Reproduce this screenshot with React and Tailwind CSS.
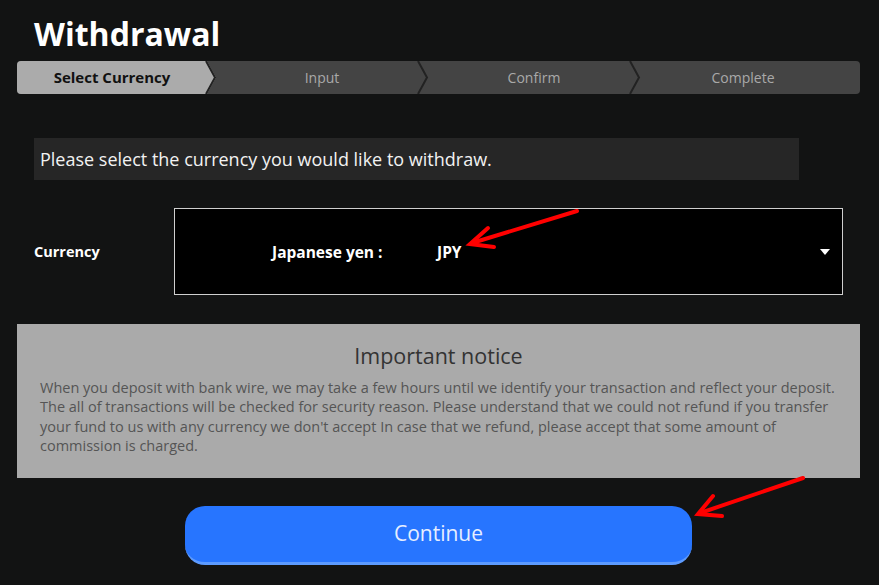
const steps = [
    { label: "Select Currency", width: "w-[199px] pr-[9px]" },
    { label: "Input", width: "w-[212px]" },
    { label: "Confirm", width: "w-[212px]" },
    { label: "Complete", width: "flex-1 pr-[14px]" },
];

export default function App() {
    return (
        <div
            className="relative min-h-[585px] w-[879px] bg-[#121313] pl-[17px] pr-[19px] pt-[12px]"
            style={{ fontFamily: '"Open Sans", "Noto Sans", sans-serif' }}
        >
            {/* title */}
            <h1 className="pl-[17px] text-[32px] font-bold leading-[44px] text-white">
                Withdrawal
            </h1>

            {/* steps */}
            <div className="mt-[5px] flex h-[33px] overflow-hidden rounded-[4px] bg-[#444444]">
                {steps.map((s, i) => (
                    <div key={s.label} className={"relative flex items-center justify-center " + s.width}>
                        {i === 0 && (
                            <div className="absolute inset-0 bg-[#ababab] [clip-path:polygon(0_0,calc(100%-9px)_0,100%_50%,calc(100%-9px)_100%,0_100%)]" />
                        )}
                        <span
                            className={
                                i === 0
                                    ? "relative text-[15px] font-bold text-[#111]"
                                    : "relative text-[14px] text-[#a9a9a9]"
                            }
                        >
                            {s.label}
                        </span>
                        {i < 3 && (
                            <svg className="absolute right-[-1px] top-0 z-10" width="12" height="33" viewBox="0 0 12 33">
                                <polyline points="1,0 10,16.5 1,33" fill="none" stroke="#222" strokeWidth="2" />
                            </svg>
                        )}
                    </div>
                ))}
            </div>

            {/* instruction */}
            <div className="ml-[17px] mt-[44px] flex h-[42px] w-[765px] items-center bg-[#262626] px-[6px]">
                <p className="text-[18px] text-[#f2f2f2]">
                    Please select the currency you would like to withdraw.
                </p>
            </div>

            {/* currency select */}
            <div className="mt-[28px] flex items-center">
                <div className="w-[157px] pl-[17px] text-[14.5px] font-bold text-white">Currency</div>
                <div className="flex h-[87px] w-[669px] items-center border border-[#cfcfcf] bg-black pr-[12px]">
                    <span className="ml-[97px] w-[165px] pt-[2px] text-[15.5px] font-bold text-white">Japanese yen :</span>
                    <span className="pt-[2px] text-[15.5px] font-bold text-white">JPY</span>
                    <svg className="ml-auto" width="10" height="6" viewBox="0 0 10 6">
                        <polygon points="0,0 10,0 5,6" fill="#fff" />
                    </svg>
                </div>
            </div>

            {/* notice */}
            <div className="mt-[29px] h-[154px] bg-[#aaaaaa] px-[23px] pt-[18px]">
                <h2 className="text-center text-[21.5px] leading-[28px] text-[#333]">Important notice</h2>
                <p className="mt-[8px] whitespace-nowrap text-[14.5px] leading-[19.3px] text-[#555]">
                    When you deposit with bank wire, we may take a few hours until we identify your transaction and reflect your deposit.
                    <br />
                    The all of transactions will be checked for security reason. Please understand that we could not refund if you transfer
                    <br />
                    your fund to us with any currency we don't accept In case that we refund, please accept that some amount of
                    <br />
                    commission is charged.
                </p>
            </div>

            {/* continue */}
            <div className="mt-[28px] flex justify-center">
                <button className="h-[59px] w-[507px] rounded-[20px] border-b-[3px] border-[#5d9bff] bg-[#2775ff] text-[21px] text-[#e6eeff]">
                    Continue
                </button>
            </div>

            {/* annotation arrows */}
            <svg className="pointer-events-none absolute left-0 top-0" width="879" height="585">
                <g stroke="#ff0000" strokeWidth="4" strokeLinecap="round" fill="none">
                    <line x1="577" y1="211" x2="472" y2="243" />
                    <polyline points="488,228 470,244 494,247" />
                    <line x1="803" y1="478" x2="700" y2="513" />
                    <polyline points="713,496 698,514 722,516" />
                </g>
            </svg>
        </div>
    );
}
